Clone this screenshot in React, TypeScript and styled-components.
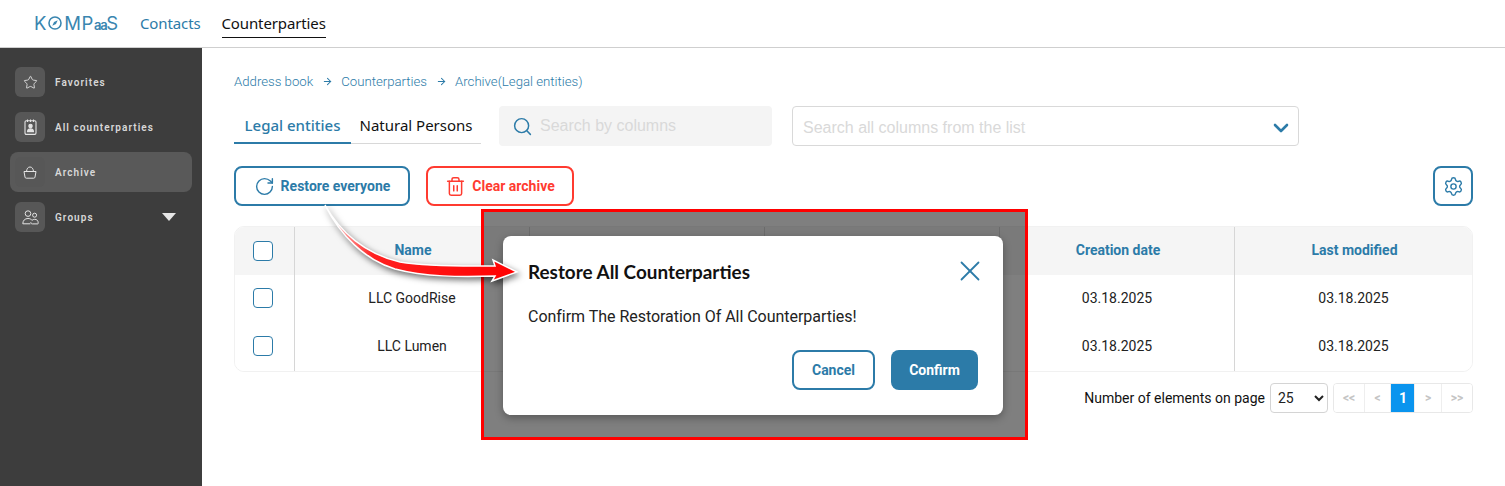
import React from "react";
import styled, { createGlobalStyle } from "styled-components";
import { ArrowRight, ChevronDown, RotateCw, Search, Settings, Star, Trash2, X } from "lucide-react";

const blue = "#2c7ba8";
const red = "#ff3b30";

const GlobalStyle = createGlobalStyle`
  html, body {
    margin: 0;
    padding: 0;
    background: #fff;
    overflow: hidden;
    font-family: Roboto, "Liberation Sans", sans-serif;
  }
  * { box-sizing: border-box; }
`;

const Page = styled.div`
  position: relative;
  width: 1505px;
  height: 486px;
  overflow: hidden;
`;

const Header = styled.header`
  height: 48px;
  border-bottom: 1px solid #cfcfcf;
  display: flex;
  align-items: flex-start;
  padding-left: 34px;
`;

const Logo = styled.div`
  display: flex;
  align-items: center;
  width: 106px;
  height: 47px;
  padding-bottom: 1px;
  font-family: Inter, sans-serif;
  font-size: 18.5px;
  line-height: 1;
  letter-spacing: 0.7px;
  color: #3a86b0;
`;

const LogoSmall = styled.span`
  font-size: 13px;
  font-weight: 600;
  letter-spacing: -1.4px;
  margin: 4px 0 0 0;
`;

const NavLink = styled.a<{ $active?: boolean }>`
  font-family: "Noto Sans", sans-serif;
  font-size: 15px;
  letter-spacing: -0.12px;
  line-height: 20px;
  margin: 13px 21px 0 0;
  padding-bottom: 3px;
  height: 25px;
  color: ${(p) => (p.$active ? "#111" : blue)};
  border-bottom: ${(p) => (p.$active ? "1px solid #111" : "none")};
`;

const Body = styled.div`
  display: flex;
  height: 438px;
`;

const Sidebar = styled.aside`
  width: 202px;
  flex: none;
  background: #3d3d3d;
  padding: 14px 10px 0;
  display: flex;
  flex-direction: column;
  gap: 5px;
`;

const SideItem = styled.div<{ $active?: boolean }>`
  height: 40px;
  display: flex;
  align-items: center;
  gap: 10px;
  padding: 0 16px 0 5px;
  border-radius: 8px;
  background: ${(p) => (p.$active ? "#595959" : "transparent")};
`;

const SideIcon = styled.div`
  width: 30px;
  height: 30px;
  border-radius: 6px;
  background: #575757;
  color: #e4e4e4;
  display: flex;
  align-items: center;
  justify-content: center;
`;

const SideLabel = styled.span`
  font-size: 10px;
  font-weight: 600;
  letter-spacing: 1.05px;
  color: #d8d8d8;
`;

const Triangle = styled.span`
  margin-left: auto;
  width: 0;
  height: 0;
  border-left: 7px solid transparent;
  border-right: 7px solid transparent;
  border-top: 8px solid #e6e6e6;
`;

const Main = styled.main`
  flex: 1;
  padding: 25px 32px 0;
`;

const Breadcrumbs = styled.nav`
  display: flex;
  align-items: center;
  gap: 8.5px;
  height: 16px;
  font-size: 13.2px;
  font-weight: 300;
  color: ${blue};
`;

const FilterRow = styled.div`
  display: flex;
  align-items: flex-start;
  margin-top: 17px;
  height: 40px;
`;

const Tabs = styled.div`
  display: flex;
  width: 247px;
  height: 38px;
  margin-right: 18px;
`;

const Tab = styled.div<{ $active?: boolean }>`
  height: 38px;
  line-height: 39px;
  text-align: center;
  font-family: "Noto Sans", sans-serif;
  font-size: 15px;
  font-weight: ${(p) => (p.$active ? 500 : 400)};
  width: ${(p) => (p.$active ? "117px" : "130px")};
  color: ${(p) => (p.$active ? blue : "#111")};
  border-bottom: ${(p) => (p.$active ? `2px solid ${blue}` : "1px solid #d8d8d8")};
`;

const SearchBox = styled.div`
  width: 273px;
  height: 40px;
  background: #f4f4f4;
  border-radius: 4px;
  display: flex;
  align-items: center;
  gap: 7px;
  padding-left: 13px;
  color: ${blue};
  margin-right: 20px;
`;

const Placeholder = styled.span`
  font-family: "Liberation Sans", sans-serif;
  font-size: 16px;
  color: #d9d9d9;
`;

const ColumnSelect = styled.div`
  width: 507px;
  height: 40px;
  border: 1px solid #d9d9d9;
  border-radius: 4px;
  display: flex;
  align-items: center;
  justify-content: space-between;
  padding: 3px 5px 0 10px;
  color: ${blue};
`;

const ActionRow = styled.div`
  display: flex;
  gap: 16px;
  margin-top: 20px;
`;

const OutlineButton = styled.button<{ $color?: string; $width: number }>`
  width: ${(p) => p.$width}px;
  height: 40px;
  background: #fff;
  border: 2px solid ${(p) => p.$color || blue};
  border-radius: 8px;
  color: ${(p) => p.$color || blue};
  font-family: Roboto, sans-serif;
  font-size: 14px;
  font-weight: 700;
  display: flex;
  align-items: center;
  justify-content: center;
  gap: 6px;
  padding: 0;
`;

const GearButton = styled(OutlineButton)`
  margin-left: auto;
`;

const Table = styled.div`
  margin-top: 20px;
  width: 1239px;
  border: 1px solid #f1f1f1;
  border-radius: 10px;
  overflow: hidden;
`;

const TableRow = styled.div<{ $head?: boolean }>`
  display: grid;
  grid-template-columns: 60px repeat(4, 235px) 1fr;
  height: 48px;
  background: ${(p) => (p.$head ? "#f5f5f5" : "#fff")};
`;

const Cell = styled.div<{ $head?: boolean; $divider?: boolean }>`
  display: flex;
  align-items: center;
  justify-content: center;
  padding: 0 0 2px ${(p) => (p.$head ? "2px" : "0")};
  font-size: 14px;
  font-weight: ${(p) => (p.$head ? 700 : 400)};
  color: ${(p) => (p.$head ? blue : "#222")};
  border-right: ${(p) => (p.$divider ? "1px solid #d6d6d6" : "none")};
`;

const CheckCell = styled(Cell)`
  padding: 0 4px 2px 0;
`;

const Checkbox = styled.span<{ $head?: boolean }>`
  width: 20px;
  height: 20px;
  margin-top: ${(p) => (p.$head ? "2px" : "0")};
  border: 1.5px solid ${blue};
  border-radius: 4px;
  background: #fff;
`;

const Pagination = styled.div`
  display: flex;
  justify-content: flex-end;
  align-items: center;
  margin-top: 11px;
  height: 30px;
`;

const PageLabel = styled.span`
  font-size: 14px;
  color: #111;
  margin-right: 5px;
`;

const PageSizeSelect = styled.select`
  width: 58px;
  height: 30px;
  border: 1px solid #d4d4d4;
  border-radius: 4px;
  background: #fff;
  color: #222;
  font-family: Roboto, sans-serif;
  font-size: 14px;
  padding-left: 3px;
  margin-right: 5px;
`;

const PageGroup = styled.div`
  display: flex;
  height: 30px;
  border: 1px solid #e8e8e8;
  border-radius: 4px;
  overflow: hidden;
`;

const PageButton = styled.div<{ $active?: boolean; $width: number }>`
  width: ${(p) => p.$width}px;
  display: flex;
  align-items: center;
  justify-content: center;
  padding-left: ${(p) => (p.$active ? "1px" : "0")};
  font-size: ${(p) => (p.$active ? "14px" : "12px")};
  font-weight: 700;
  color: ${(p) => (p.$active ? "#fff" : "#c4c4c4")};
  background: ${(p) => (p.$active ? "#0a94ee" : "#fff")};
  border-right: 1px solid #eeeeee;
  &:last-child { border-right: none; }
`;

// red frame + dimmed backdrop pasted over the page
const Frame = styled.div`
  position: absolute;
  left: 481px;
  top: 209px;
  width: 547px;
  height: 231px;
  border: 3px solid #ff0000;
  background: rgba(0, 0, 0, 0.5);
  padding: 24px 0 0 19px;
`;

const Modal = styled.div`
  width: 500px;
  height: 179px;
  background: #fff;
  border-radius: 8px;
  box-shadow: 0 3px 8px rgba(0, 0, 0, 0.3);
  padding: 23px 25px 25px;
  display: flex;
  flex-direction: column;
`;

const ModalHead = styled.div`
  display: flex;
  align-items: center;
  justify-content: space-between;
  height: 24px;
  color: ${blue};
`;

const ModalTitle = styled.h2`
  margin: 0;
  font-family: Lato, sans-serif;
  font-size: 18.9px;
  font-weight: 700;
  color: #111;
`;

const CloseIcon = styled(X)`
  flex: none;
  margin-right: -8.5px;
`;

const ModalText = styled.p`
  margin: 23px 0 0;
  font-size: 16px;
  line-height: 22px;
  letter-spacing: -0.03px;
  color: #222;
`;

const ModalActions = styled.div`
  margin-top: auto;
  display: flex;
  justify-content: flex-end;
  gap: 16px;
`;

const FilledButton = styled.button`
  width: 87px;
  height: 40px;
  border: none;
  border-radius: 8px;
  background: ${blue};
  color: #fff;
  font-family: Roboto, sans-serif;
  font-size: 14px;
  font-weight: 700;
`;

const Arrow = styled.svg`
  position: absolute;
  left: 300px;
  top: 190px;
  overflow: visible;
  filter: drop-shadow(2px 3px 3px rgba(0, 0, 0, 0.55));
`;

const CompassMark = styled.svg`
  flex: none;
  margin: 0 2px 0 1px;
`;

const ClipboardUserIcon = () => (
  <svg width="13" height="16" viewBox="0 0 13 16" fill="none" stroke="currentColor" strokeWidth="1.1">
    <rect x="1" y="1.800" width="11" height="13.600" rx="1.300" />
    <path d="M3.500 .5v2.500M6.500 .5v2.500M9.500 .5v2.500" />
    <circle cx="6.500" cy="7" r="1.700" fill="currentColor" />
    <path d="M3.500 12.600c.2-1.800 1.300-2.700 3-2.700s2.800.9 3 2.700z" fill="currentColor" />
  </svg>
);

const BasketIcon = () => (
  <svg width="14" height="13" viewBox="0 0 14 13" fill="none" stroke="currentColor" strokeWidth="1">
    <path d="M1 5.500h12l-1 5.600a1.300 1.300 0 0 1-1.300 1.100H3.300A1.300 1.300 0 0 1 2 11.100z" />
    <path d="M3.500 5.500C3.800 2.500 5 1 7 1s3.200 1.500 3.500 4.500" />
  </svg>
);

const GroupIcon = () => (
  <svg width="17" height="15" viewBox="0 0 17 15" fill="none" stroke="currentColor" strokeWidth="1">
    <circle cx="6" cy="3.600" r="2.800" />
    <path d="M.8 13.800c0-3.300 2.100-5.300 5.200-5.300 1.700 0 3 .6 3.900 1.700M.8 13.800h7.600" />
    <circle cx="12.600" cy="5.200" r="2" />
    <path d="M10 10.400c.7-.7 1.600-1.100 2.700-1.100 2.100 0 3.500 1.400 3.500 3.500v.6c0 .3-.2.500-.5.500h-5.400c-1 0-1.700-.8-1.400-1.800" />
  </svg>
);

const rows = ["LLC GoodRise", "LLC Lumen"];

const App: React.FC = () => (
  <Page>
    <GlobalStyle />
    <Header>
      <Logo>
        K
        <CompassMark width="14" height="14" viewBox="0 0 17 17" fill="none" stroke="#3a86b0">
          <circle cx="8.500" cy="8.500" r="7.300" strokeWidth="1.900" />
          <path d="M11.800 5.200 9.700 9.700 5.200 11.800 7.300 7.300z" fill="#3a86b0" stroke="none" />
        </CompassMark>
        MP<LogoSmall>aa</LogoSmall>S
      </Logo>
      <NavLink>Contacts</NavLink>
      <NavLink $active>Counterparties</NavLink>
    </Header>
    <Body>
      <Sidebar>
        <SideItem>
          <SideIcon><Star size={15} strokeWidth={1.4} /></SideIcon>
          <SideLabel>Favorites</SideLabel>
        </SideItem>
        <SideItem>
          <SideIcon><ClipboardUserIcon /></SideIcon>
          <SideLabel>All counterparties</SideLabel>
        </SideItem>
        <SideItem $active>
          <SideIcon><BasketIcon /></SideIcon>
          <SideLabel>Archive</SideLabel>
        </SideItem>
        <SideItem>
          <SideIcon><GroupIcon /></SideIcon>
          <SideLabel>Groups</SideLabel>
          <Triangle />
        </SideItem>
      </Sidebar>
      <Main>
        <Breadcrumbs>
          Address book <ArrowRight size={11} strokeWidth={2.2} />
          Counterparties <ArrowRight size={11} strokeWidth={2.2} />
          Archive(Legal entities)
        </Breadcrumbs>
        <FilterRow>
          <Tabs>
            <Tab $active>Legal entities</Tab>
            <Tab>Natural Persons</Tab>
          </Tabs>
          <SearchBox>
            <Search size={21} strokeWidth={1.7} />
            <Placeholder>Search by columns</Placeholder>
          </SearchBox>
          <ColumnSelect>
            <Placeholder>Search all columns from the list</Placeholder>
            <ChevronDown size={24} strokeWidth={2.6} />
          </ColumnSelect>
        </FilterRow>
        <ActionRow>
          <OutlineButton $width={176}>
            <RotateCw size={21} strokeWidth={1.6} />
            Restore everyone
          </OutlineButton>
          <OutlineButton $width={148} $color={red}>
            <Trash2 size={21} strokeWidth={1.7} />
            Clear archive
          </OutlineButton>
          <GearButton $width={40}>
            <Settings size={21} strokeWidth={1.6} />
          </GearButton>
        </ActionRow>
        <Table>
          <TableRow $head>
            <CheckCell $divider><Checkbox $head /></CheckCell>
            <Cell $head $divider>Name</Cell>
            <Cell $head $divider />
            <Cell $head $divider />
            <Cell $head $divider>Creation date</Cell>
            <Cell $head>Last modified</Cell>
          </TableRow>
          {rows.map((name) => (
            <TableRow key={name}>
              <CheckCell $divider><Checkbox /></CheckCell>
              <Cell $divider>{name}</Cell>
              <Cell $divider />
              <Cell $divider />
              <Cell $divider>03.18.2025</Cell>
              <Cell>03.18.2025</Cell>
            </TableRow>
          ))}
        </Table>
        <Pagination>
          <PageLabel>Number of elements on page</PageLabel>
          <PageSizeSelect defaultValue="25">
            <option value="25">25</option>
          </PageSizeSelect>
          <PageGroup>
            <PageButton $width={31}>&lt;&lt;</PageButton>
            <PageButton $width={26}>&lt;</PageButton>
            <PageButton $width={24} $active>1</PageButton>
            <PageButton $width={27}>&gt;</PageButton>
            <PageButton $width={30}>&gt;&gt;</PageButton>
          </PageGroup>
        </Pagination>
      </Main>
    </Body>
    <Frame>
      <Modal>
        <ModalHead>
          <ModalTitle>Restore All Counterparties</ModalTitle>
          <CloseIcon size={34} strokeWidth={1.25} />
        </ModalHead>
        <ModalText>Confirm The Restoration Of All Counterparties!</ModalText>
        <ModalActions>
          <OutlineButton $width={83}>Cancel</OutlineButton>
          <FilledButton>Confirm</FilledButton>
        </ModalActions>
      </Modal>
    </Frame>
    <Arrow width="230" height="100" viewBox="300 190 230 100">
      <defs>
        <linearGradient id="arrowFill" x1="0" y1="0" x2="1" y2="0">
          <stop offset="0" stopColor="#ffe0e0" />
          <stop offset="0.25" stopColor="#ff2020" />
          <stop offset="1" stopColor="#ff0000" />
        </linearGradient>
      </defs>
      <path
        d="M325 205C340 232 365 254 400 262C430 267 465 266 495 266L493 260L517 272L492 281L495 276C460 277 425 277 395 269C365 260 340 235 325 205Z"
        fill="url(#arrowFill)"
        stroke="#fff"
        strokeWidth="1.500"
      />
    </Arrow>
  </Page>
);

export default App;
